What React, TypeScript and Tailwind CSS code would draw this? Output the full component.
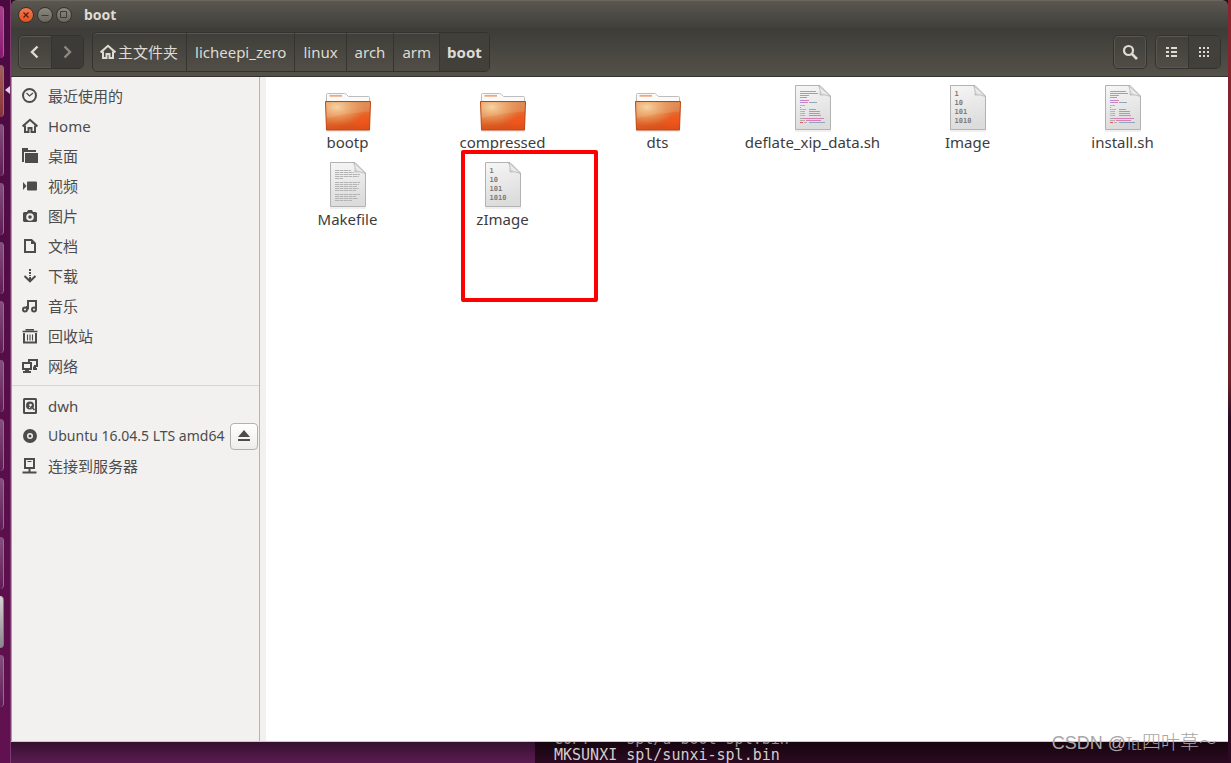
import React from 'react';

interface IconProps {
  children: React.ReactNode;
}

const Icon: React.FC<IconProps> = ({ children }) => (
  <svg
    viewBox="0 0 16 16"
    className="w-4 h-4 shrink-0"
    fill="none"
    stroke="currentColor"
    strokeWidth="2"
    aria-hidden="true"
  >
    {children}
  </svg>
);

const HomeIcon = () => (
  <Icon>
    <path d="M0.6 8.4 8 1.8l7.4 6.6" />
    <path d="M3 7.5V14h3.500v-4h3v4H13V7.500" />
  </Icon>
);

const ICONS = {
  recent: (
    <Icon>
      <circle cx="7.5" cy="7.5" r="6.500" />
      <path d="M4.500 5 7.500 8l3.500-3" strokeWidth="1.200" />
    </Icon>
  ),
  home: <HomeIcon />,
  desktop: (
    <Icon>
      <path d="M0 0h6v2h8v2H2v10H0z" fill="currentColor" stroke="none" />
      <path d="M3 5h13v10H3z" fill="currentColor" stroke="none" />
    </Icon>
  ),
  video: (
    <Icon>
      <rect x="5" y="3.500" width="10" height="9" rx="1" fill="currentColor" stroke="none" />
      <path d="M1 4l3.500 4L1 12z" fill="currentColor" stroke="none" />
    </Icon>
  ),
  photo: (
    <Icon>
      <path
        d="M2 4h3l1-2h4l1 2h3l1 1v8l-1 1H2l-1-1V5zM8 5.200a3.800 3.800 0 1 0 0 7.600a3.800 3.800 0 1 0 0-7.600z"
        fill="currentColor"
        fillRule="evenodd"
        stroke="none"
      />
      <circle cx="8" cy="9" r="1.800" fill="currentColor" stroke="none" />
    </Icon>
  ),
  document: (
    <Icon>
      <path d="M3 2h6.500L13 5.500V14H3z" />
      <path d="M9 1v5h4z" fill="currentColor" stroke="none" />
    </Icon>
  ),
  download: (
    <Icon>
      <path d="M8 1v7" strokeDasharray="2 1" />
      <path d="M8 9v4" />
      <path d="M2.500 8 8 13.300 13.500 8" />
    </Icon>
  ),
  music: (
    <Icon>
      <circle cx="3" cy="11.500" r="2" />
      <circle cx="12" cy="11.500" r="2" />
      <path d="M6 2v6.500M5 11.500V8M6 3h8v8.500M6 2v9.500" />
    </Icon>
  ),
  trash: (
    <Icon>
      <path d="M0.500 3.500h15M3.500 1.800h8.500" strokeWidth="1.600" />
      <path d="M2 5v9.500h12V5" />
      <path d="M5.500 6.500v6M8 6.500v6M10.500 6.500v6" strokeWidth="1.100" />
    </Icon>
  ),
  network: (
    <Icon>
      <path d="M7 4V2h8v6h-3" />
      <path d="M1 5h8v6H1z" />
      <path d="M3 11h4v2h2v2H1v-2h2zM12 8h2v2h1v2h-4v-3z" fill="currentColor" stroke="none" />
    </Icon>
  ),
  disk: (
    <Icon>
      <rect x="2" y="1" width="12" height="14" rx="0.500" />
      <circle cx="8" cy="7.500" r="4" fill="currentColor" stroke="none" />
      <circle cx="8.500" cy="7" r="1.300" fill="#f2f1f0" stroke="none" />
      <path d="M7 10l1.500-1.500 3.500 4" stroke="#f2f1f0" strokeWidth="1" />
      <path d="M9 8.500 12.500 12" strokeWidth="1.600" />
    </Icon>
  ),
  disc: (
    <Icon>
      <circle cx="8" cy="8" r="5" strokeWidth="4" />
      <circle cx="8" cy="8" r="1.500" fill="currentColor" stroke="none" />
    </Icon>
  ),
  server: (
    <Icon>
      <rect x="3" y="1" width="9" height="9" />
      <path d="M5.500 3.500h4" strokeWidth="1" />
      <path d="M7.500 10v4M0.500 14.500h14" />
    </Icon>
  ),
};

interface Place {
  icon: keyof typeof ICONS;
  name: string;
  ejectable?: boolean;
}

const bookmarks: Place[] = [
  { icon: 'recent', name: '最近使用的' },
  { icon: 'home', name: 'Home' },
  { icon: 'desktop', name: '桌面' },
  { icon: 'video', name: '视频' },
  { icon: 'photo', name: '图片' },
  { icon: 'document', name: '文档' },
  { icon: 'download', name: '下载' },
  { icon: 'music', name: '音乐' },
  { icon: 'trash', name: '回收站' },
  { icon: 'network', name: '网络' },
];

const devices: Place[] = [
  { icon: 'disk', name: 'dwh' },
  { icon: 'disc', name: 'Ubuntu 16.04.5 LTS amd64', ejectable: true },
  { icon: 'server', name: '连接到服务器' },
];

const PlaceRow: React.FC<Place> = ({ icon, name, ejectable }) => (
  <li className="flex h-[30px] items-center pl-[10px] pr-px">
    <a
      href="#"
      className={`flex min-w-0 flex-1 items-center gap-[10px] whitespace-nowrap ${ejectable ? 'text-sm' : ''}`}
    >
      {ICONS[icon]}
      {name}
    </a>
    {ejectable && (
      <button
        aria-label="Eject"
        className="flex h-[27px] w-7 shrink-0 items-center justify-center rounded border border-[#b4b1ad] bg-gradient-to-b from-white to-[#eeedeb]"
      >
        <svg viewBox="0 0 14 12" className="h-3 w-[14px]" fill="currentColor" aria-hidden="true">
          <path d="M7 0l6 7H1zM1 9h12v2H1z" />
        </svg>
      </button>
    )}
  </li>
);

const FolderArt = () => (
  <svg viewBox="0 0 48 48" className="h-12 w-12" aria-hidden="true">
    <defs>
      <linearGradient id="folder-base" x1="0" y1="0" x2="0.200" y2="1">
        <stop offset="0" stopColor="#dc8a50" />
        <stop offset="0.500" stopColor="#de7538" />
        <stop offset="1" stopColor="#dc4f1a" />
      </linearGradient>
      <radialGradient id="folder-glow" cx="0.250" cy="0.200" r="0.650">
        <stop offset="0" stopColor="#f6cf97" />
        <stop offset="1" stopColor="#f0a05a" stopOpacity="0" />
      </radialGradient>
      <radialGradient id="folder-hot" cx="0.850" cy="0.650" r="0.350">
        <stop offset="0" stopColor="#f85418" stopOpacity="0.800" />
        <stop offset="1" stopColor="#f85418" stopOpacity="0" />
      </radialGradient>
    </defs>
    <path d="M2 47h44" stroke="#000" strokeOpacity="0.150" strokeWidth="1" />
    <path d="M2.500 20V10.500q0-1 1-1h17q1 0 2 1l2 2h20q1 0 1 1V20z" fill="#fafafa" stroke="#bdbdbd" />
    <path d="M5.500 11.800h12.500" stroke="#f0a878" strokeWidth="1.800" />
    <path d="M1.500 17.500h45l-1 28.500h-43z" fill="url(#folder-base)" />
    <path d="M1.500 17.500h45l-1 28.500h-43z" fill="url(#folder-hot)" />
    <path d="M1.500 17.500h45l-1 28.500h-43z" fill="url(#folder-glow)" stroke="#bd4714" />
    <path d="M2 18.500h44l-.5 9Q24 29 2.500 34z" fill="#fff" fillOpacity="0.100" />
  </svg>
);

const Sheet: React.FC<IconProps> = ({ children }) => (
  <svg viewBox="0 0 48 48" className="h-12 w-12" aria-hidden="true">
    <defs>
      <linearGradient id="sheet-fill" x1="0" y1="0" x2="0.200" y2="1">
        <stop offset="0" stopColor="#f6f6f6" />
        <stop offset="1" stopColor="#dcdcdc" />
      </linearGradient>
      <linearGradient id="sheet-fold" x1="0" y1="1" x2="1" y2="0">
        <stop offset="0" stopColor="#a8a8a8" />
        <stop offset="0.350" stopColor="#e8e8e8" />
        <stop offset="0.700" stopColor="#ffffff" />
      </linearGradient>
    </defs>
    <path d="M6 47h36" stroke="#000" strokeOpacity="0.120" strokeWidth="1" />
    <path d="M6.500 1.500H31L41.500 12v33.500h-35z" fill="url(#sheet-fill)" stroke="#b2b2b2" />
    {children}
    <path d="M29.500 1.500q2.500 4.500 1.500 9.500 5-1 10.500 1.500z" fill="url(#sheet-fold)" stroke="#b2b2b2" strokeWidth="0.800" />
  </svg>
);

const textRows = [
  [9, 16], [11, 19], [13, 25], [15, 24], [17, 8],
  [21, 25], [23, 24], [25, 22], [27, 24], [29, 21],
  [33, 25], [35, 21], [37, 23], [39, 17],
];

const TextArt = () => (
  <Sheet>
    {textRows.map(([y, w]) => (
      <path key={y} d={`M11 ${y + 0.5}h${w}`} stroke="#b4b4b4" strokeWidth="1" strokeDasharray="4 0.500" />
    ))}
  </Sheet>
);

const BinaryArt = () => (
  <Sheet>
    <g fill="#7c7c7c" fontFamily="DejaVu Sans Mono, monospace" fontSize="7" fontWeight="700">
      <text x="10.500" y="12">1</text>
      <text x="10.500" y="21">10</text>
      <text x="10.500" y="30">101</text>
      <text x="10.500" y="39">1010</text>
    </g>
  </Sheet>
);

// x, y, length, colour
const codeRows: [number, number, number, string][] = [
  [11, 7, 16, '#8aa9bd'], [11, 9, 18, '#8aa9bd'], [11, 11, 9, '#8aa9bd'], [11, 13, 7, '#8aa9bd'],
  [11, 16, 4, '#b58ad8'], [15, 16, 5, '#d77fb5'],
  [11, 18, 3, '#b58ad8'], [14, 18, 5, '#d77fb5'], [20, 18, 8, '#8aa9bd'],
  [11, 21, 3, '#9ecb9a'], [14, 21, 2, '#b0b0b0'], [11, 23, 1, '#a0a0a0'],
  [11, 25, 4, '#9ecb9a'], [15, 25, 2, '#b0b0b0'], [20, 25, 7, '#8aa9bd'],
  [11, 27, 3, '#9ecb9a'], [14, 27, 2, '#b0b0b0'], [20, 27, 11, '#8aa9bd'],
  [11, 29, 3, '#9ecb9a'], [14, 29, 2, '#b0b0b0'], [20, 29, 11, '#8aa9bd'],
  [11, 31, 3, '#9ecb9a'], [14, 31, 2, '#b0b0b0'], [20, 31, 12, '#8aa9bd'],
  [11, 34, 4, '#b0a0a8'], [15, 34, 20, '#d77fb5'],
  [11, 36, 5, '#b0b0b0'], [17, 36, 15, '#d77fb5'],
  [11, 38, 3, '#e05a5a'], [15, 38, 3, '#b0b0b0'], [20, 38, 16, '#8aa9bd'],
];

const ScriptArt = () => (
  <Sheet>
    {codeRows.map(([x, y, w, color]) => (
      <path key={`${x}-${y}`} d={`M${x} ${y + 0.5}h${w}`} stroke={color} strokeWidth="1" />
    ))}
  </Sheet>
);

const files = [
  { name: 'bootp', art: <FolderArt /> },
  { name: 'compressed', art: <FolderArt /> },
  { name: 'dts', art: <FolderArt /> },
  { name: 'deflate_xip_data.sh', art: <ScriptArt /> },
  { name: 'Image', art: <BinaryArt /> },
  { name: 'install.sh', art: <ScriptArt /> },
  { name: 'Makefile', art: <TextArt /> },
  { name: 'zImage', art: <BinaryArt />, marked: true },
];

const crumbs = ['licheepi_zero', 'linux', 'arch', 'arm'];

const launcherTiles = [
  'from-[#a8408c] to-[#8a1570]',
  'from-[#a0625c] to-[#8a3038]',
  'from-[#84507e] to-[#611a55]',
  'from-[#84507e] to-[#611a55]',
  'from-[#84507e] to-[#611a55]',
  'from-[#84507e] to-[#611a55]',
  'from-[#84507e] to-[#611a55]',
  'from-[#84507e] to-[#611a55]',
  'from-[#84507e] to-[#611a55]',
  'from-[#84507e] to-[#611a55]',
  'from-[#d8d4d8] to-[#8a868a]',
  'from-[#84507e] to-[#611a55]',
];

const Launcher = () => (
  <aside className="relative flex w-[11px] shrink-0 flex-col gap-[7px] border-r border-[#7c3a70] bg-gradient-to-b from-[#4a0a40] to-[#621150] pt-[6px]">
    {launcherTiles.map((tone, i) => (
      <div key={i} className={`h-[52px] w-1 shrink-0 rounded-r border-r border-[#9c6894] bg-gradient-to-b ${tone}`} />
    ))}
    <div className="absolute top-[86px] right-0 border-y-4 border-r-[5px] border-y-transparent border-r-[#e0d5de]" />
  </aside>
);

const TitleBar = () => (
  <header className="flex h-7 shrink-0 items-center gap-[3px] rounded-t-md border-t border-[#6b675f] bg-gradient-to-b from-[#5a574f] to-[#403f3a] pl-[7px]">
    <button aria-label="Close" className="flex h-4 w-4 items-center justify-center rounded-full border border-[#34322d] bg-gradient-to-b from-[#f4794f] to-[#e2501e] text-[#5a200c]">
      <svg viewBox="0 0 8 8" className="h-2 w-2" stroke="currentColor" strokeWidth="1.300" aria-hidden="true">
        <path d="M1.500 1.500l5 5M6.500 1.500l-5 5" />
      </svg>
    </button>
    <button aria-label="Minimize" className="flex h-4 w-4 items-center justify-center rounded-full border border-[#34322d] bg-gradient-to-b from-[#8b887f] to-[#6a675f] text-[#3c3b37]">
      <svg viewBox="0 0 8 8" className="h-2 w-2" stroke="currentColor" aria-hidden="true">
        <path d="M0.500 4.500h7" />
      </svg>
    </button>
    <button aria-label="Maximize" className="flex h-4 w-4 items-center justify-center rounded-full border border-[#34322d] bg-gradient-to-b from-[#8b887f] to-[#6a675f] text-[#3c3b37]">
      <svg viewBox="0 0 8 8" className="h-2 w-2" fill="none" stroke="currentColor" aria-hidden="true">
        <path d="M0.500 0.500h6v6h-6z" />
      </svg>
    </button>
    <h1 className="pl-[9px] text-sm font-bold text-[#dfdbd2]">boot</h1>
  </header>
);

const Toolbar = () => (
  <nav className="flex h-[49px] shrink-0 items-center gap-2 border-b border-[#33322e] bg-gradient-to-b from-[#3d3c38] to-[#545149] px-[7px] text-[#dfdbd2]">
    <div className="flex h-[34px] w-[66px] divide-x divide-[#35342f] overflow-hidden rounded-[5px] border border-[#33322e] shadow-[inset_0_0_0_1px_#5a574f]">
      <button aria-label="Back" className="flex flex-1 items-center justify-center">
        <svg viewBox="0 0 16 16" className="h-4 w-4" fill="none" stroke="currentColor" strokeWidth="2.400" aria-hidden="true">
          <path d="M10.500 2.500 5 8l5.500 5.500" />
        </svg>
      </button>
      <button aria-label="Forward" className="flex flex-1 items-center justify-center bg-[#3c3b37] text-[#8c8981]">
        <svg viewBox="0 0 16 16" className="h-4 w-4" fill="none" stroke="currentColor" strokeWidth="2.400" aria-hidden="true">
          <path d="M5.500 2.500 11 8l-5.500 5.500" />
        </svg>
      </button>
    </div>

    <div className="flex h-10 divide-x divide-[#35342f] overflow-hidden rounded-[5px] border border-[#33322e] whitespace-nowrap shadow-[inset_0_1px_0_#5a574f]">
      <button className="flex items-center gap-[2px] pr-2 pl-[7px]">
        <HomeIcon />
        主文件夹
      </button>
      {crumbs.map((name) => (
        <button key={name} className="px-2">
          {name}
        </button>
      ))}
      <button className="bg-[#42403b] px-[7px] font-bold">boot</button>
    </div>

    <div className="flex-1" />

    <button aria-label="Search" className="flex h-[34px] w-[34px] items-center justify-center rounded-[5px] border border-[#33322e] shadow-[inset_0_0_0_1px_#5a574f]">
      <svg viewBox="0 0 16 16" className="h-4 w-4" fill="none" stroke="currentColor" strokeWidth="2.200" aria-hidden="true">
        <circle cx="6.500" cy="6.500" r="4.500" />
        <path d="M9.800 9.800 15 15" strokeWidth="2.600" />
      </svg>
    </button>
    <div className="flex h-[34px] w-[66px] divide-x divide-[#35342f] overflow-hidden rounded-[5px] border border-[#33322e] shadow-[inset_0_0_0_1px_#5a574f]">
      <button aria-label="List view" className="flex flex-1 items-center justify-center">
        <svg viewBox="0 0 12 10" className="h-[10px] w-3" fill="currentColor" aria-hidden="true">
          <path d="M0 0h3v2H0zM5 0h6v2H5zM0 4h3v2H0zM5 4h6v2H5zM0 8h3v2H0zM5 8h6v2H5z" />
        </svg>
      </button>
      <button aria-label="Icon view" className="flex flex-1 items-center justify-center bg-[#42403b]">
        <svg viewBox="0 0 10 10" className="h-[10px] w-[10px]" fill="currentColor" aria-hidden="true">
          <path d="M0 0h2v2H0zM4 0h2v2H4zM8 0h2v2H8zM0 4h2v2H0zM4 4h2v2H4zM8 4h2v2H8zM0 8h2v2H0zM4 8h2v2H4zM8 8h2v2H8z" />
        </svg>
      </button>
    </div>
  </nav>
);

const Sidebar = () => (
  <aside className="w-[249px] shrink-0 border-r border-l border-[#b8b5b0] border-l-[#a89aa4] bg-[#f2f1f0] pt-1 text-[#4c4c4c]">
    <ul>
      {bookmarks.map((place) => (
        <PlaceRow key={place.name} {...place} />
      ))}
    </ul>
    <hr className="mt-1 mb-[5px] border-[#d8d6d3]" />
    <ul>
      {devices.map((place) => (
        <PlaceRow key={place.name} {...place} />
      ))}
    </ul>
  </aside>
);

const App: React.FC = () => {
  return (
    <div className="relative flex h-screen overflow-hidden bg-[#2c0a24] font-['Noto_Sans','Noto_Sans_CJK_SC',sans-serif] text-[15px] leading-5">
      <Launcher />
      <div className="flex min-w-0 flex-1 flex-col">
        <main className="flex min-h-0 flex-1 flex-col">
          <TitleBar />
          <Toolbar />
          <div className="flex min-h-0 flex-1 border-b border-[#cfc9cd]">
            <Sidebar />
            <section className="flex-1 border-l-[6px] border-[#f2f1f0] bg-white">
              <ul className="grid grid-cols-[repeat(auto-fill,155px)] gap-y-[9px] pt-[7px] pl-1 text-[#3c3c3c]">
                {files.map((file) => (
                  <li key={file.name} className="relative">
                    <button className="flex w-full flex-col items-center">
                      {file.art}
                      {file.name}
                    </button>
                    {file.marked && (
                      <div className="pointer-events-none absolute -top-[11px] left-9 h-[152px] w-[137px] rounded-xs border-4 border-[#ff0000]" />
                    )}
                  </li>
                ))}
              </ul>
            </section>
          </div>
        </main>
        <footer className="flex h-[21px] shrink-0">
          <div className="w-[524px] bg-gradient-to-b from-[#35102f] to-[#5c1c52]" />
          <pre className="flex flex-1 flex-col justify-end overflow-hidden bg-gradient-to-b from-[#16050f] to-[#2c0a22] pl-[19px] font-['DejaVu_Sans_Mono',monospace] leading-4 text-[#d0cdcb]">
            <span className="text-[#8f8a8d]">COPY    spl/u-boot-spl.bin</span>
            <span>MKSUNXI spl/sunxi-spl.bin</span>
          </pre>
        </footer>
      </div>
      <div className="w-[3px] shrink-0 bg-gradient-to-b from-[#8a262c] from-0% via-[#6c2028] via-50% to-[#2c0a24] to-55%" />
      <p className="absolute right-[14px] bottom-[7px] font-['Liberation_Sans','Noto_Sans_CJK_SC',sans-serif] text-lg leading-6 font-light text-[#a9a5a8]">
        CSDN @<span className="text-base">℡</span>
        <span className="text-[19px]">四叶草</span>～
      </p>
    </div>
  );
};

export default App;
